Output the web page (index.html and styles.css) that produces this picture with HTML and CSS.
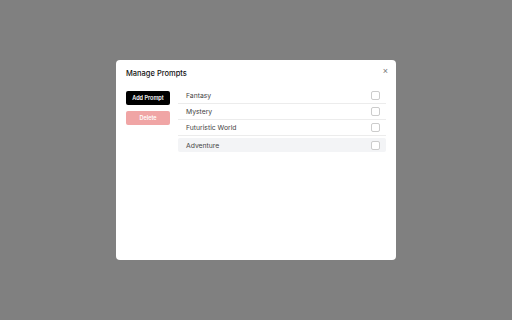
FILE: index.html
```html
<!DOCTYPE html>
<html>

<head>
  <title>Manage Prompts</title>
  <link rel="stylesheet" href="styles.css">
</head>

<body>
  <div class="modalOuter">
    <div class="modal">
      <div class="modalHeader">
        <span class="modalTitle">Manage Prompts</span>
        <button class="closeButton">&times;</button>
      </div>
      <div class="modalBody">
        <div class="actions">
          <button class="addButton">Add Prompt</button>
          <button class="deleteButton">Delete</button>
        </div>
        <div class="prompts">
          <div class="promptRow"><span>Fantasy</span><input type="checkbox" /></div>
          <div class="promptRow"><span>Mystery</span><input type="checkbox" /></div>
          <div class="promptRow"><span>Futuristic World</span><input type="checkbox" /></div>
          <div class="promptRow active"><span>Adventure</span><input type="checkbox" /></div>
        </div>
      </div>
    </div>
  </div>
</body>

</html>
```

FILE: styles.css
```css
body {
  margin: 0;
  font-family: Inter, "Noto Sans", sans-serif;
  background: #808080;
  overflow: hidden;
}

.modalOuter {
  width: 100vw;
  height: 100vh;
  display: flex;
  justify-content: center;
  align-items: center;
}

.modal {
  width: 280px;
  height: 200px;
  background: #fff;
  border-radius: 4px;
  padding: 8px 10px;
  box-sizing: border-box;
}

.modalHeader {
  display: flex;
  justify-content: space-between;
  align-items: flex-start;
  height: 23px;
}

.modalTitle {
  font-size: 7.5px;
  font-weight: 500;
  color: #111;
  margin-top: 1px;
}

.closeButton {
  border: none;
  background: none;
  padding: 0;
  margin: -1px -2px 0 0;
  font-size: 9px;
  line-height: 9px;
  color: #777;
}

.modalBody {
  display: flex;
  gap: 8px;
}

.actions {
  display: flex;
  flex-direction: column;
  gap: 6px;
  width: 44px;
}

.actions>button {
  border: none;
  border-radius: 2px;
  color: #fff;
  font-family: inherit;
  font-size: 5.5px;
  font-weight: 600;
  height: 14px;
  padding: 0;
}

.addButton {
  background: #000;
}

.deleteButton {
  background: #f0a5a5;
}

.prompts {
  flex-grow: 1;
  margin-top: -3px;
}

.promptRow {
  display: flex;
  justify-content: space-between;
  align-items: center;
  height: 15px;
  padding: 0 6px 0 8px;
  border-bottom: 1px solid #ececec;
  font-size: 6.8px;
  color: #444;
}

.promptRow.active {
  background: #f3f4f6;
  border-bottom: none;
  border-radius: 2px;
  margin-top: 2px;
  height: 14px;
}

.promptRow>input {
  appearance: none;
  width: 9px;
  height: 9px;
  margin: 0;
  border: 1px solid #ccc;
  border-radius: 2px;
  background: #fff;
}
```
